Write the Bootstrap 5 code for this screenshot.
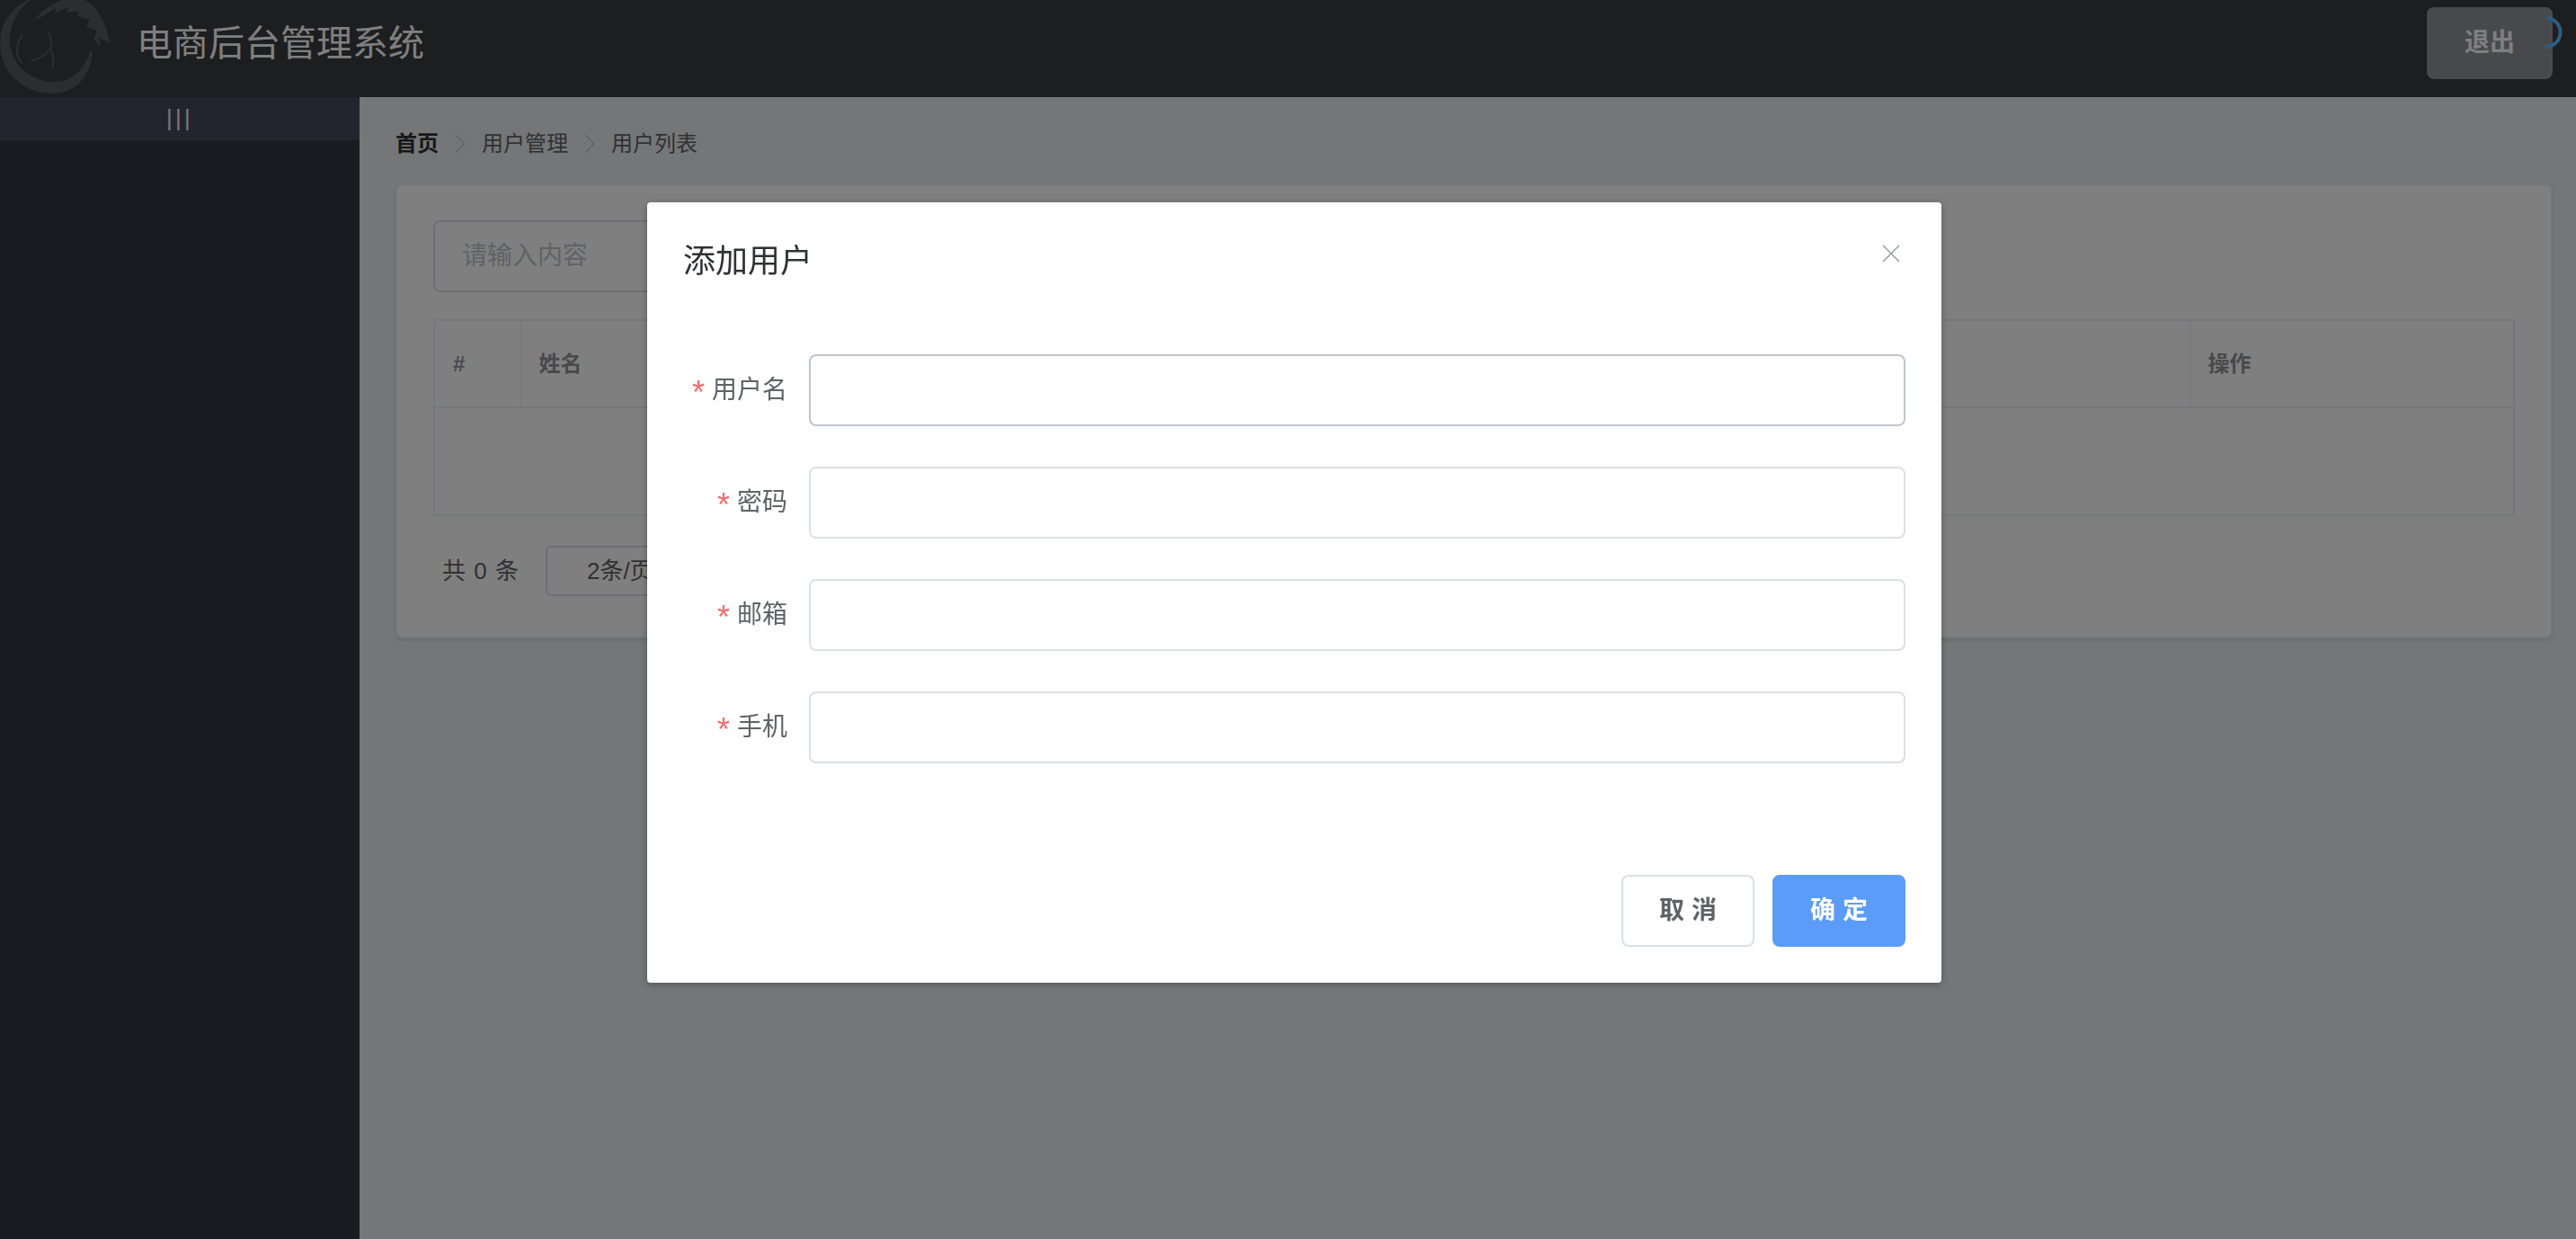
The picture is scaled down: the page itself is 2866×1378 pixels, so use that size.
<!DOCTYPE html>
<html lang="zh-CN">
<head>
    <meta charset="UTF-8">
    <meta name="viewport" content="width=device-width, initial-scale=1.0">
    <title>电商后台管理系统</title>
    <link href="https://cdn.jsdelivr.net/npm/bootstrap@5.3.0/dist/css/bootstrap.min.css" rel="stylesheet">
    <style>
        html, body { height: 100%; overflow: hidden; }
        body {
            font-family: "Liberation Sans", "Noto Sans CJK SC", sans-serif;
            color: #606266;
            background: #eaedf1;
        }

        /* Header */
        .app-shell { height: 100vh; }
        .top-bar { height: 108px; background: #393d41; padding: 8px 26px 20px 0; flex: none; }
        .brand-logo { width: 122px; height: 108px; margin-top: -8px; overflow: visible; flex: none; }
        .brand-title { font-size: 40px; line-height: 80px; color: #fff; margin: 0 0 0 30px; font-weight: 400; }
        .logout-btn {
            position: relative;
            width: 140px; height: 80px;
            font-size: 28px; font-weight: 700; color: #fff;
            background: #909399; border: 0; border-radius: 8px;
        }
        .load-arc { position: absolute; left: 118px; top: 8px; width: 36px; height: 40px; }

        /* Sidebar */
        .side-bar { width: 400px; background: #343842; flex: none; }
        .side-toggle {
            height: 48px; background: #474b5c; color: #f0f0f0;
            font-size: 26px; line-height: 46px; letter-spacing: 3.2px; text-align: center;
            font-weight: 300;
        }

        /* Main */
        .main-pane { padding: 40px 26px 40px 40px; background: #eaedf1; min-width: 0; }
        .crumbs { height: 24px; font-size: 24px; line-height: 24px; margin-bottom: 32px; gap: 18px; align-items: center; }
        .crumbs .breadcrumb-item { padding-left: 0; color: #606266; }
        .crumbs .breadcrumb-item::before { display: none; }
        .crumbs .breadcrumb-item.first { color: #303133; font-weight: 700; }
        .crumbs svg { width: 12px; height: 22px; display: block; }

        .list-card {
            border: 2px solid #ebeef5; border-radius: 8px;
            box-shadow: 0 2px 4px rgba(0, 0, 0, .12);
            padding: 39px 40px 45px;
        }
        .search-box { width: 780px; gap: 20px; }
        .search-input {
            height: 80px; font-size: 28px; padding: 0 30px;
            border: 2px solid #dcdfe6; border-radius: 8px; color: #606266;
        }
        .search-input::placeholder { color: #c0c4cc; }
        .user-table { table-layout: fixed; margin: 30px 0 0; border: 2px solid #ebeef5; font-size: 24px; }
        .user-table th, .user-table td { border: 1px solid #ebeef5; }
        .user-table thead th {
            height: 97px; vertical-align: middle; padding: 0 20px;
            color: #909399; font-weight: 700; border-bottom-width: 2px;
        }
        .user-table td { height: 120px; vertical-align: middle; text-align: center; color: #909399; }
        .col-index { width: 96px; }
        .col-actions { width: 361px; }
        .pager { margin-top: 33px; font-size: 26px; color: #606266; padding-left: 10px; gap: 30px; height: 56px; word-spacing: 2px; }
        .page-size {
            width: 240px; height: 56px; padding-left: 44px; line-height: 52px;
            border: 2px solid #dcdfe6; border-radius: 6px;
        }

        /* Dialog */
        .modal-backdrop.show { opacity: .5; }
        .add-dialog { max-width: 1440px; width: 1440px; margin: 225px 0 0 720px; }
        .add-dialog .modal-content {
            border: 0; border-radius: 4px; height: 868px; padding: 40px;
            box-shadow: 0 2px 8px rgba(0, 0, 0, .3);
        }
        .dialog-title { font-size: 36px; line-height: 48px; color: #303133; font-weight: 400; margin: 2px 0 0; }
        .dialog-close {
            position: absolute; top: 41px; right: 40px;
            width: 32px; height: 32px; padding: 6px;
            border: 0; background: none; color: #909399;
        }
        .dialog-close svg { display: block; width: 20px; height: 20px; }
        .user-form { margin-top: 79px; gap: 45px; }
        .field-label { width: 140px; padding-right: 24px; margin: 0; text-align: right; font-size: 28px; line-height: 40px; color: #606266; flex: none; white-space: nowrap; }
        .field-label i { color: #f56c6c; font-style: normal; font-size: 36px; line-height: 0; vertical-align: -6px; margin-right: 8px; font-family: "Liberation Sans", sans-serif; }
        .field-input { height: 80px; width: 1220px; border: 2px solid #dcdfe6; border-radius: 8px; font-size: 28px; }
        .field-input.hovered { border-color: #c0c4cc; }
        .dialog-foot { margin-top: auto; gap: 20px; }
        .dialog-btn {
            width: 148px; height: 80px; padding: 0;
            font-size: 28px; font-weight: 700; border-radius: 8px;
        }
        .dialog-btn.plain { background: #fff; border: 2px solid #dcdfe6; color: #606266; }
        .dialog-btn.sure { background: #5c9cf9; border: 2px solid #5c9cf9; color: #fff; }
    </style>
</head>
<body>
    <div class="app-shell d-flex flex-column">
        <!-- Header -->
        <header class="top-bar d-flex justify-content-between align-items-start">
            <div class="d-flex align-items-start">
                <svg class="brand-logo" viewBox="0 0 122 108" fill="#565a5e" aria-hidden="true">
                    <path d="M36 -2C14 6 0 26 0 48C0 80 26 104 58 104C82 104 100 88 103 58L100 56C96 76 80 92 58 91C34 90 12 72 11 46C10 28 20 10 36 -2Z"/>
                    <path d="M38 22C50 8 66 -2 84 -3C104 -1 118 22 122 48L110 42L112 52L104 44L108 34L96 30L100 22L86 18L88 12L74 14L76 8L62 14L62 9L48 18Z"/>
                    <path d="M54 36C58 44 58 50 56 54M56 54C50 62 42 66 34 68M56 54C60 62 60 70 58 76M25 38C19 48 15 60 24 70" fill="none" stroke="#565a5e" stroke-width="2"/>
                </svg>
                <h1 class="brand-title">电商后台管理系统</h1>
            </div>
            <button type="button" class="btn logout-btn">退出
                <svg class="load-arc" viewBox="0 0 36 40" aria-hidden="true">
                    <path d="M16 4A16 16 0 0 1 13 36" fill="none" stroke="#56bcff" stroke-width="4"/>
                </svg>
            </button>
        </header>

        <div class="d-flex flex-grow-1" style="min-height:0">
            <!-- Sidebar -->
            <aside class="side-bar">
                <div class="side-toggle">|||</div>
            </aside>

            <!-- Main -->
            <main class="main-pane flex-grow-1">
                <ol class="breadcrumb crumbs">
                    <li class="breadcrumb-item first">首页</li>
                    <li><svg viewBox="0 0 12 22" fill="none" stroke="#c0c4cc" stroke-width="1.4"><path d="M1 1L11 11L1 21"/></svg></li>
                    <li class="breadcrumb-item">用户管理</li>
                    <li><svg viewBox="0 0 12 22" fill="none" stroke="#c0c4cc" stroke-width="1.4"><path d="M1 1L11 11L1 21"/></svg></li>
                    <li class="breadcrumb-item">用户列表</li>
                </ol>

                <div class="card list-card">
                    <div class="d-flex search-box">
                        <input type="text" class="form-control search-input" placeholder="请输入内容">
                        <button type="button" class="btn btn-primary flex-none">添加用户</button>
                    </div>

                    <table class="table user-table">
                        <thead>
                            <tr>
                                <th class="col-index">#</th>
                                <th>姓名</th>
                                <th>邮箱</th>
                                <th>电话</th>
                                <th>角色</th>
                                <th>状态</th>
                                <th class="col-actions">操作</th>
                            </tr>
                        </thead>
                        <tbody>
                            <tr><td colspan="7">暂无数据</td></tr>
                        </tbody>
                    </table>

                    <div class="d-flex align-items-center pager">
                        <span>共 0 条</span>
                        <div class="page-size">2条/页</div>
                        <span>前往 1 页</span>
                    </div>
                </div>
            </main>
        </div>
    </div>

    <!-- Add user dialog -->
    <div class="modal-backdrop show"></div>
    <div class="modal d-block" tabindex="-1">
        <div class="modal-dialog add-dialog">
            <div class="modal-content">
                <h5 class="dialog-title">添加用户</h5>
                <button type="button" class="dialog-close" aria-label="Close">
                    <svg viewBox="0 0 20 20" fill="none" stroke="currentColor" stroke-width="1.3"><path d="M1 1L19 19M19 1L1 19"/></svg>
                </button>

                <form class="user-form d-flex flex-column">
                    <div class="d-flex align-items-center">
                        <label class="field-label"><i>*</i>用户名</label>
                        <input type="text" class="form-control field-input hovered">
                    </div>
                    <div class="d-flex align-items-center">
                        <label class="field-label"><i>*</i>密码</label>
                        <input type="password" class="form-control field-input">
                    </div>
                    <div class="d-flex align-items-center">
                        <label class="field-label"><i>*</i>邮箱</label>
                        <input type="text" class="form-control field-input">
                    </div>
                    <div class="d-flex align-items-center">
                        <label class="field-label"><i>*</i>手机</label>
                        <input type="text" class="form-control field-input">
                    </div>
                </form>

                <div class="dialog-foot d-flex justify-content-end">
                    <button type="button" class="btn dialog-btn plain">取 消</button>
                    <button type="button" class="btn dialog-btn sure">确 定</button>
                </div>
            </div>
        </div>
    </div>

    <script src="https://cdn.jsdelivr.net/npm/bootstrap@5.3.0/dist/js/bootstrap.bundle.min.js"></script>
</body>
</html>
